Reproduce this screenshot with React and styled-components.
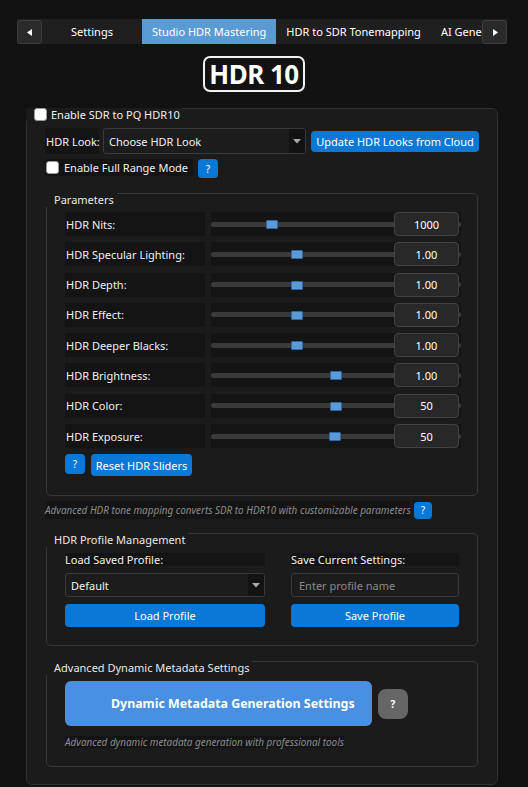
import React from 'react';
import styled, { createGlobalStyle } from 'styled-components';

const GlobalStyle = createGlobalStyle`
  html, body { margin: 0; padding: 0; background: #121212; }
  body {
    font-family: "Noto Sans", "Open Sans", sans-serif;
    font-size: 11px;
    color: #f0f0f0;
  }
  * { box-sizing: border-box; }
`;

const Page = styled.div`
  width: 528px;
  height: 787px;
  overflow: hidden;
  padding: 19px 0 0 17px;
`;

const TabBar = styled.div`
  display: flex;
  width: 490px;
  height: 25px;
  background: #1f1f1f;
`;

const ArrowBtn = styled.div`
  flex: 0 0 25px;
  height: 24px;
  margin-top: 1px;
  background: #2a2a2a;
  border: 1px solid #3d3d3d;
  border-radius: 3px;
  display: flex;
  align-items: center;
  justify-content: center;
`;

const TabStrip = styled.div`
  flex: 1;
  display: flex;
  overflow: hidden;
`;

const Tab = styled.div`
  flex: 0 0 auto;
  min-width: ${(p) => p.$min || 0}px;
  padding: 0 10px;
  display: flex;
  align-items: center;
  justify-content: center;
  white-space: nowrap;
  color: #fff;
  background: ${(p) => (p.$active ? '#5b9bd5' : 'transparent')};
`;

const LogoRow = styled.div`
  display: flex;
  padding-left: 186px;
  margin-top: 12px;
`;

const Logo = styled.div`
  width: 102px;
  height: 36px;
  border: 2px solid #f2f2f2;
  border-radius: 7px;
  display: flex;
  align-items: center;
  justify-content: center;
  font-weight: 700;
  font-size: 26px;
  letter-spacing: -0.5px;
  line-height: 1;
  color: #fff;
`;

const OuterBox = styled.div`
  display: flex;
  flex-direction: column;
  align-items: flex-start;
  width: 472px;
  margin: 16px 0 0 9px;
  border: 1px solid #303030;
  border-radius: 6px;
  background: #1b1b1b;
  padding: 0 0 17px 18px;
`;

const BoxTitle = styled.div`
  display: flex;
  align-items: center;
  gap: 4px;
  height: 13px;
  margin: -1px 0 0 -19px;
  padding: 0 2px 0 8px;
  background: #1b1b1b;
  white-space: nowrap;
`;

const Check = styled.span`
  flex: 0 0 13px;
  width: 13px;
  height: 13px;
  background: #fff;
  border: 1px solid #9a9a9a;
  border-radius: 3px;
`;

const Row = styled.div`
  display: flex;
  align-items: ${(p) => p.$align || 'center'};
  gap: ${(p) => p.$gap || 0}px;
  margin-top: ${(p) => p.$mt || 0}px;
  height: ${(p) => p.$h}px;
`;

const DarkLabel = styled.div`
  display: flex;
  align-items: center;
  gap: ${(p) => p.$gap || 0}px;
  width: ${(p) => p.$w}px;
  height: ${(p) => p.$h}px;
  flex: 0 0 auto;
  padding-left: 1px;
  background: #141414;
  color: #f0f0f0;
  white-space: nowrap;
`;

const Combo = styled.div`
  display: flex;
  align-items: center;
  width: ${(p) => p.$w}px;
  height: ${(p) => p.$h}px;
  background: #1c1c1c;
  border: 1px solid #3a3a3a;
  border-radius: 3px;
  padding-left: 5px;
  color: #f0f0f0;
  overflow: hidden;
`;

const ComboArrow = styled.div`
  margin-left: auto;
  width: 16px;
  align-self: stretch;
  background: #121212;
  display: flex;
  align-items: center;
  justify-content: center;
`;

const TextInput = styled.div`
  display: flex;
  align-items: center;
  width: ${(p) => p.$w}px;
  height: ${(p) => p.$h}px;
  background: #1c1c1c;
  border: 1px solid #3a3a3a;
  border-radius: 3px;
  padding-left: 7px;
  color: #8a8a8a;
`;

const BlueBtn = styled.div`
  display: flex;
  align-items: center;
  justify-content: center;
  width: ${(p) => p.$w}px;
  height: ${(p) => p.$h}px;
  flex: 0 0 auto;
  margin-left: ${(p) => p.$ml || 0}px;
  background: #0a78d7;
  border-radius: 4px;
  color: #fff;
  white-space: nowrap;
`;

const HelpBtn = styled(BlueBtn)`
  font-size: 10px;
`;

const Group = styled.div`
  display: flex;
  flex-direction: column;
  align-items: flex-start;
  width: 432px;
  margin: ${(p) => p.$mt}px 0 0 1px;
  border: 1px solid #383838;
  border-radius: 5px;
  background: #1b1b1b;
  padding: 0 0 ${(p) => p.$pb}px 18px;
`;

const GroupTitle = styled.div`
  height: 14px;
  line-height: 14px;
  margin: -1px 0 0 -19px;
  padding: 0 3px 0 8px;
  background: #1b1b1b;
  color: #e8e8e8;
  white-space: nowrap;
`;

const ParamList = styled.div`
  display: flex;
  flex-direction: column;
  gap: 6.3px;
  margin-top: 5px;
`;

const ParamRow = styled.div`
  display: flex;
  gap: 6px;
  height: 24px;
`;

const SliderCell = styled.div`
  position: relative;
  display: flex;
  align-items: center;
  width: 250px;
  height: 24px;
  background: #141414;
`;

const Track = styled.div`
  width: 100%;
  height: 5px;
  background: #3a3a3a;
  border-radius: 3px;
`;

const Handle = styled.div`
  position: absolute;
  top: 8px;
  width: 12px;
  height: 9px;
  background: #5b9bd5;
  border: 1px solid #2f67a3;
  border-radius: 1px;
`;

const SpinBox = styled.div`
  position: absolute;
  right: 2px;
  top: 0;
  width: 65px;
  height: 24px;
  background: #282828;
  border: 1px solid #424242;
  border-radius: 4px;
  display: flex;
  align-items: center;
  justify-content: center;
  color: #fff;
`;

const Hint = styled.div`
  display: flex;
  align-items: center;
  width: ${(p) => p.$w}px;
  height: ${(p) => p.$h}px;
  background: #141414;
  color: #8c8c8c;
  font-style: italic;
  font-size: 9.9px;
  white-space: nowrap;
  margin-top: ${(p) => p.$mt || 0}px;
`;

const Columns = styled.div`
  display: flex;
  gap: 26px;
  margin-top: 6px;
`;

const Column = styled.div`
  display: flex;
  flex-direction: column;
  gap: 7px;
  width: ${(p) => p.$w}px;
`;

const SmallLabel = styled.div`
  height: 13px;
  line-height: 13px;
  background: #141414;
  color: #f0f0f0;
  white-space: nowrap;
`;

const BigBtn = styled.div`
  display: flex;
  align-items: center;
  width: 307px;
  height: 45px;
  padding-left: 46px;
  background: #4a90e2;
  border-radius: 6px;
  color: #fff;
  font-weight: 700;
  font-size: 12.4px;
  white-space: nowrap;
`;

const GrayHelp = styled.div`
  width: 30px;
  height: 30px;
  border-radius: 8px;
  background: #666;
  color: #fff;
  font-weight: 700;
  font-size: 10px;
  display: flex;
  align-items: center;
  justify-content: center;
`;

const Triangle = ({ dir }) => (
  <svg width="6" height="7" viewBox="0 0 6 7">
    {dir === 'left' ? (
      <polygon points="5,0 5,7 0,3.5" fill="#fff" />
    ) : (
      <polygon points="1,0 1,7 6,3.5" fill="#fff" />
    )}
  </svg>
);

const DownArrow = () => (
  <svg width="8" height="5" viewBox="0 0 8 5">
    <polygon points="0,0 8,0 4,4.5" fill="#a8a8a8" />
  </svg>
);

const params = [
  { label: 'HDR Nits:', value: '1000', pos: 55 },
  { label: 'HDR Specular Lighting:', value: '1.00', pos: 80 },
  { label: 'HDR Depth:', value: '1.00', pos: 80 },
  { label: 'HDR Effect:', value: '1.00', pos: 80 },
  { label: 'HDR Deeper Blacks:', value: '1.00', pos: 80 },
  { label: 'HDR Brightness:', value: '1.00', pos: 119 },
  { label: 'HDR Color:', value: '50', pos: 119 },
  { label: 'HDR Exposure:', value: '50', pos: 118 },
];

export default function App() {
  return (
    <>
      <GlobalStyle />
      <Page>
        <TabBar>
          <ArrowBtn><Triangle dir="left" /></ArrowBtn>
          <TabStrip>
            <Tab $min={100}>Settings</Tab>
            <Tab $active>Studio HDR Mastering</Tab>
            <Tab>HDR to SDR Tonemapping</Tab>
            <Tab>AI Generation</Tab>
          </TabStrip>
          <ArrowBtn><Triangle dir="right" /></ArrowBtn>
        </TabBar>

        <LogoRow>
          <Logo>HDR 10</Logo>
        </LogoRow>

        <OuterBox>
          <BoxTitle>
            <Check />
            <span>Enable SDR to PQ HDR10</span>
          </BoxTitle>

          <Row $mt={7} $h={26} $gap={4}>
            <DarkLabel $w={54} $h={26}>HDR Look:</DarkLabel>
            <Combo $w={203} $h={26}>
              Choose HDR Look
              <ComboArrow><DownArrow /></ComboArrow>
            </Combo>
            <BlueBtn $w={168} $h={21} $ml={1}>Update HDR Looks from Cloud</BlueBtn>
          </Row>

          <Row $mt={5} $h={19} $gap={5} $align="flex-start">
            <DarkLabel $w={148} $h={17} $gap={5}>
              <Check />
              <span>Enable Full Range Mode</span>
            </DarkLabel>
            <HelpBtn $w={20} $h={19}>?</HelpBtn>
          </Row>

          <Group $mt={15} $pb={19}>
            <GroupTitle>Parameters</GroupTitle>
            <ParamList>
              {params.map((p) => (
                <ParamRow key={p.label}>
                  <DarkLabel $w={140} $h={24}>{p.label}</DarkLabel>
                  <SliderCell>
                    <Track />
                    <Handle style={{ left: p.pos }} />
                    <SpinBox>{p.value}</SpinBox>
                  </SliderCell>
                </ParamRow>
              ))}
            </ParamList>
            <Row $mt={6} $h={22} $gap={6} $align="flex-start">
              <HelpBtn $w={20} $h={20}>?</HelpBtn>
              <BlueBtn $w={101} $h={22}>Reset HDR Sliders</BlueBtn>
            </Row>
          </Group>

          <Row $mt={5} $h={18} $gap={4}>
            <Hint $w={365} $h={18}>
              Advanced HDR tone mapping converts SDR to HDR10 with customizable parameters
            </Hint>
            <HelpBtn $w={18} $h={17}>?</HelpBtn>
          </Row>

          <Group $mt={14} $pb={18}>
            <GroupTitle>HDR Profile Management</GroupTitle>
            <Columns>
              <Column $w={200}>
                <SmallLabel>Load Saved Profile:</SmallLabel>
                <Combo $w={200} $h={24}>
                  Default
                  <ComboArrow><DownArrow /></ComboArrow>
                </Combo>
                <BlueBtn $w={200} $h={23}>Load Profile</BlueBtn>
              </Column>
              <Column $w={168}>
                <SmallLabel>Save Current Settings:</SmallLabel>
                <TextInput $w={168} $h={24}>Enter profile name</TextInput>
                <BlueBtn $w={168} $h={23}>Save Profile</BlueBtn>
              </Column>
            </Columns>
          </Group>

          <Group $mt={15} $pb={18}>
            <GroupTitle>Advanced Dynamic Metadata Settings</GroupTitle>
            <Row $mt={6} $h={45} $gap={6}>
              <BigBtn>Dynamic Metadata Generation Settings</BigBtn>
              <GrayHelp>?</GrayHelp>
            </Row>
            <Hint $w={279} $h={12} $mt={10}>
              Advanced dynamic metadata generation with professional tools
            </Hint>
          </Group>
        </OuterBox>
      </Page>
    </>
  );
}
